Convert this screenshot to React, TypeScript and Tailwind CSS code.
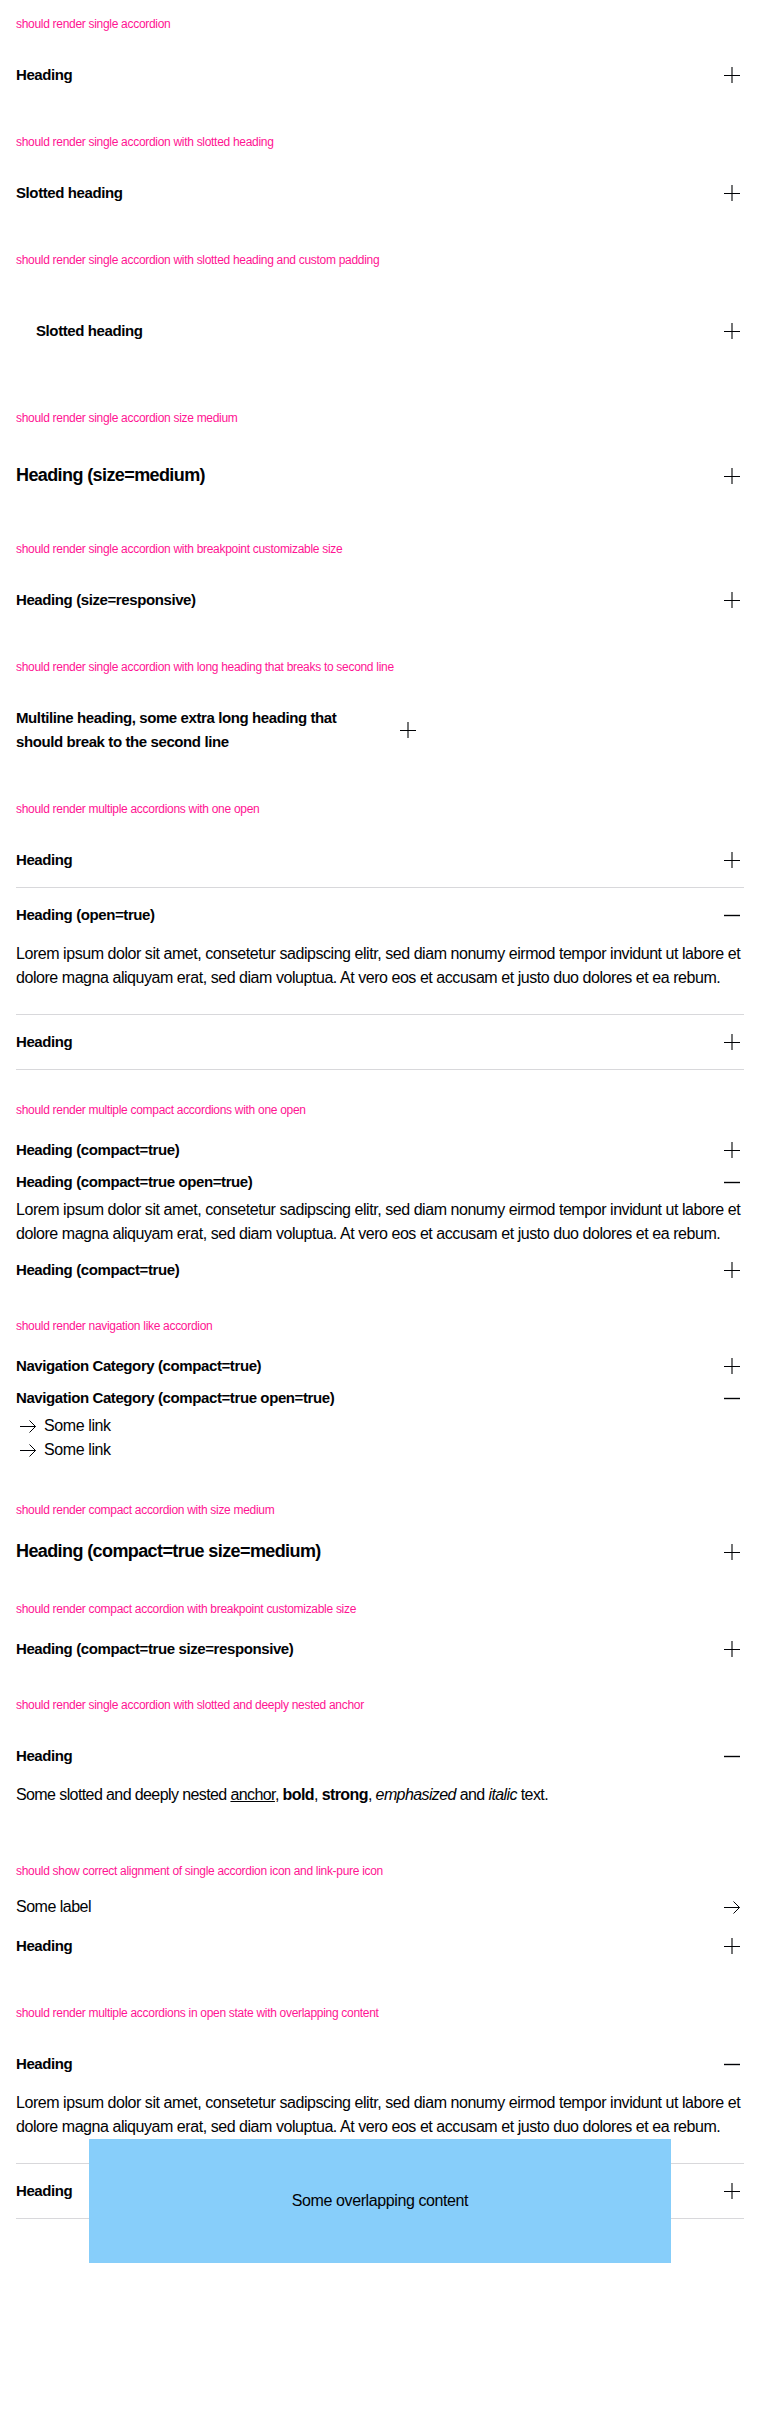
import React from 'react';

const INK = '#010205';

const PlusIcon: React.FC = () => (
  <svg width="24" height="24" viewBox="0 0 24 24" fill="none" className="shrink-0">
    <path d="M12 4v16" stroke={INK} strokeWidth="1.1" />
    <path d="M4 12.5h16" stroke={INK} strokeWidth="1" />
  </svg>
);

const MinusIcon: React.FC = () => (
  <svg width="24" height="24" viewBox="0 0 24 24" fill="none" className="shrink-0">
    <path d="M4 12.5h16" stroke={INK} strokeWidth="1.4" />
  </svg>
);

const ArrowIcon: React.FC = () => (
  <svg width="24" height="24" viewBox="0 0 24 24" fill="none" className="shrink-0">
    <path d="M4 12.5h15.5M13.5 6.5l6 6-6 6" stroke={INK} strokeWidth="1" />
  </svg>
);

const Section: React.FC<{ title: string; children: React.ReactNode }> = ({ title, children }) => (
  <div className="pb-[31px]">
    <p className="mb-[15px] text-[12px] leading-[18px] tracking-[-0.3px] text-[#ff1493]">{title}</p>
    {children}
  </div>
);

interface AccordionProps {
  heading: React.ReactNode;
  open?: boolean;
  compact?: boolean;
  medium?: boolean;
  border?: boolean;
  children?: React.ReactNode;
}

const Accordion: React.FC<AccordionProps> = ({ heading, open, compact, medium, border, children }) => {
  // heading row sizes: regular / compact, small / medium
  let row = 'py-[15px] text-[15px] leading-[24px] tracking-[-0.4px]';
  if (compact && medium) row = 'py-[3px] text-[18px] leading-[29px] tracking-[-0.6px]';
  else if (compact) row = 'py-1 text-[15px] leading-[24px] tracking-[-0.4px]';
  else if (medium) row = 'py-[18px] text-[18px] leading-[31px] tracking-[-0.6px]';

  return (
    <div className={border ? 'border-b border-[#d8d8db]' : ''}>
      <div className={`flex items-center justify-between gap-6 font-bold ${row}`}>
        <h3 className="font-bold">{heading}</h3>
        {open ? <MinusIcon /> : <PlusIcon />}
      </div>
      {open && <div className={compact ? 'pb-2' : 'pb-6'}>{children}</div>}
    </div>
  );
};

const LOREM =
  'Lorem ipsum dolor sit amet, consetetur sadipscing elitr, sed diam nonumy eirmod tempor invidunt ut labore et dolore magna aliquyam erat, sed diam voluptua. At vero eos et accusam et justo duo dolores et ea rebum.';

const Lorem: React.FC = () => <p className="text-[16px] leading-[24px] tracking-[-0.45px]">{LOREM}</p>;

const NavLink: React.FC<{ label: string }> = ({ label }) => (
  <a className="flex h-6 items-center gap-1 text-[16px] leading-[24px] tracking-[-0.4px]">
    <ArrowIcon />
    <span>{label}</span>
  </a>
);

export default function App() {
  return (
    <div className="min-h-[2419px] bg-white px-4 pt-[15px] font-['Liberation_Sans',Arial,sans-serif] text-[#010205]">
      <Section title="should render single accordion">
        <Accordion heading="Heading" />
      </Section>

      <Section title="should render single accordion with slotted heading">
        <Accordion heading="Slotted heading" />
      </Section>

      <Section title="should render single accordion with slotted heading and custom padding">
        <Accordion heading={<span className="block p-5">Slotted heading</span>} />
      </Section>

      <Section title="should render single accordion size medium">
        <Accordion heading="Heading (size=medium)" medium />
      </Section>

      <Section title="should render single accordion with breakpoint customizable size">
        <Accordion heading="Heading (size=responsive)" />
      </Section>

      <Section title="should render single accordion with long heading that breaks to second line">
        <div className="w-[404px]">
          <Accordion heading="Multiline heading, some extra long heading that should break to the second line" />
        </div>
      </Section>

      <Section title="should render multiple accordions with one open">
        <Accordion heading="Heading" border />
        <Accordion heading="Heading (open=true)" border open>
          <Lorem />
        </Accordion>
        <Accordion heading="Heading" border />
      </Section>

      <Section title="should render multiple compact accordions with one open">
        <Accordion heading="Heading (compact=true)" compact />
        <Accordion heading="Heading (compact=true open=true)" compact open>
          <Lorem />
        </Accordion>
        <Accordion heading="Heading (compact=true)" compact />
      </Section>

      <Section title="should render navigation like accordion">
        <Accordion heading="Navigation Category (compact=true)" compact />
        <Accordion heading="Navigation Category (compact=true open=true)" compact open>
          <NavLink label="Some link" />
          <NavLink label="Some link" />
        </Accordion>
      </Section>

      <Section title="should render compact accordion with size medium">
        <Accordion heading="Heading (compact=true size=medium)" compact medium />
      </Section>

      <Section title="should render compact accordion with breakpoint customizable size">
        <Accordion heading="Heading (compact=true size=responsive)" compact />
      </Section>

      <Section title="should render single accordion with slotted and deeply nested anchor">
        <Accordion heading="Heading" open>
          <p className="text-[16px] leading-[24px] tracking-[-0.6px]">
            Some slotted and deeply nested <a className="underline">anchor</a>, <b>bold</b>, <strong>strong</strong>,{' '}
            <em>emphasized</em> and <i>italic</i> text.
          </p>
        </Accordion>
      </Section>

      <Section title="should show correct alignment of single accordion icon and link-pure icon">
        <a className="flex h-6 items-center justify-between text-[16px] leading-[24px] tracking-[-0.5px]">
          <span>Some label</span>
          <ArrowIcon />
        </a>
        <Accordion heading="Heading" />
      </Section>

      <Section title="should render multiple accordions in open state with overlapping content">
        <Accordion heading="Heading" border open>
          <div className="relative">
            <Lorem />
            <div className="absolute left-[10%] top-full z-10 w-[80%] bg-[#87cefa] p-[50px] text-center text-[16px] leading-[24px] tracking-[-0.4px]">
              Some overlapping content
            </div>
          </div>
        </Accordion>
        <Accordion heading="Heading" border />
      </Section>
    </div>
  );
}
